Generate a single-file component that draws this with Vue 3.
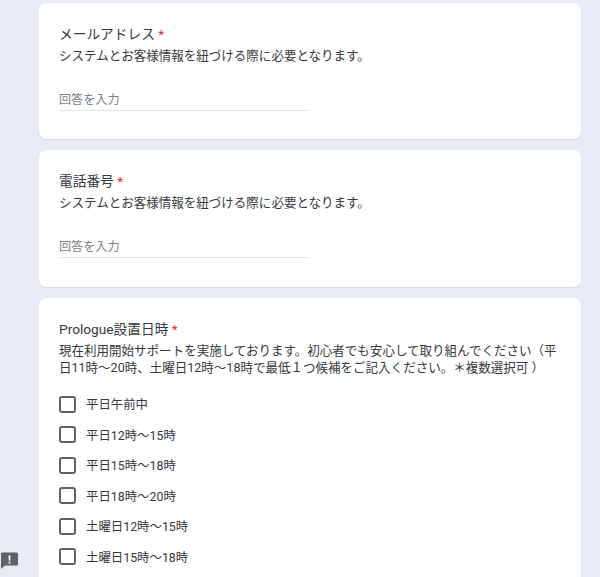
<script setup>
const desc = 'システムとお客様情報を紐づける際に必要となります。'
const options = ['平日午前中', '平日12時～15時', '平日15時～18時', '平日18時～20時', '土曜日12時～15時', '土曜日15時～18時']
</script>

<template>
  <main class="page">
    <section class="card first">
      <h2 class="title">メールアドレス<span class="req"> *</span></h2>
      <p class="desc">{{ desc }}</p>
      <div class="answer">回答を入力</div>
    </section>
    <section class="card second">
      <h2 class="title">電話番号<span class="req"> *</span></h2>
      <p class="desc">{{ desc }}</p>
      <div class="answer">回答を入力</div>
    </section>
    <section class="card third">
      <h2 class="title">Prologue設置日時<span class="req"> *</span></h2>
      <p class="desc">現在利用開始サポートを実施しております。初心者でも安心して取り組んでください（平日11時～20時、土曜日12時～18時で最低１つ候補をご記入ください。＊複数選択可 ）</p>
      <ul class="options">
        <li v-for="o in options" :key="o" class="option">
          <span class="box"></span>
          <span class="label">{{ o }}</span>
        </li>
      </ul>
    </section>
    <button class="report" aria-label="report">
      <svg width="19" height="19" viewBox="0 0 19 19">
        <path d="M2.5 1.5h14a1.5 1.5 0 0 1 1.5 1.5v10a1.5 1.5 0 0 1-1.5 1.5H5L1 18V3a1.5 1.5 0 0 1 1.5-1.5z" fill="#5f6368"/>
        <rect x="8.6" y="4.5" width="1.8" height="5" fill="#fff"/>
        <rect x="8.6" y="10.7" width="1.8" height="1.8" fill="#fff"/>
      </svg>
    </button>
  </main>
</template>

<style scoped>
.page {
  height: 577px;
  box-sizing: border-box;
  padding: 3px 19px 0 39px;
  background: #e8eaf6;
  overflow: hidden;
  display: flex;
  flex-direction: column;
  gap: 11.5px;
  position: relative;
  font-family: Roboto, "Noto Sans CJK JP", sans-serif;
}
.card {
  background: #fff;
  border-radius: 7px;
  box-shadow: 0 1px 1px rgba(60, 64, 67, 0.1);
  padding: 20.5px 20px 0;
  box-sizing: border-box;
  flex: none;
}
.first { height: 135.5px; }
.second { height: 136.5px; }
.third { height: 300px; }
.title {
  margin: 0;
  font-size: 13.7px;
  line-height: 20px;
  font-weight: 400;
  color: #36383c;
}
.req { color: #d93025; }
.desc {
  margin: 3px 0 0;
  font-size: 12.53px;
  line-height: 17.5px;
  color: #36383c;
}
.answer {
  margin-top: 24px;
  padding-top: 2px;
  width: 250px;
  height: 23px;
  line-height: 20px;
  box-sizing: border-box;
  border-bottom: 1px solid #e4e4e6;
  font-size: 12.1px;
  color: #7d8186;
}
.options {
  list-style: none;
  margin: 17.5px 0 0;
  padding: 0;
  display: flex;
  flex-direction: column;
  gap: 10.6px;
}
.option {
  display: flex;
  align-items: center;
  gap: 10px;
  height: 20px;
}
.box {
  width: 17px;
  height: 17px;
  box-sizing: border-box;
  border: 2px solid #5f6368;
  border-radius: 3px;
}
.label {
  font-size: 12.4px;
  color: #36383c;
}
.report {
  position: absolute;
  left: 0;
  top: 551px;
  padding: 0;
  border: 0;
  background: none;
  width: 19px;
  height: 19px;
}
</style>
